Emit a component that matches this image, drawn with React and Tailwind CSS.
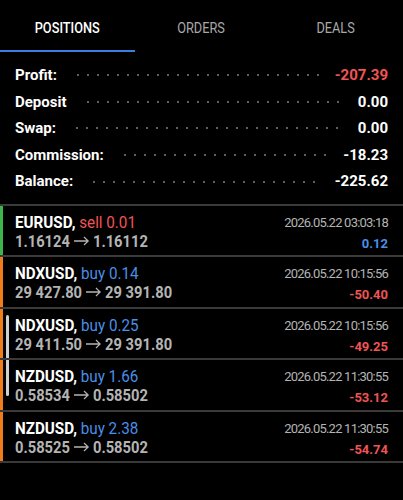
import React from "react";

const summary = [
  { label: "Profit:", value: "-207.39", red: true },
  { label: "Deposit", value: "0.00" },
  { label: "Swap:", value: "0.00" },
  { label: "Commission:", value: "-18.23" },
  { label: "Balance:", value: "-225.62" },
];

const trades = [
  { sym: "EURUSD", side: "sell", vol: "0.01", from: "1.16124", to: "1.16112", time: "2026.05.22 03:03:18", profit: "0.12", bar: "green" },
  { sym: "NDXUSD", side: "buy", vol: "0.14", from: "29 427.80", to: "29 391.80", time: "2026.05.22 10:15:56", profit: "-50.40", bar: "orange" },
  { sym: "NDXUSD", side: "buy", vol: "0.25", from: "29 411.50", to: "29 391.80", time: "2026.05.22 10:15:56", profit: "-49.25", bar: "orange", scroll: "top" },
  { sym: "NZDUSD", side: "buy", vol: "1.66", from: "0.58534", to: "0.58502", time: "2026.05.22 11:30:55", profit: "-53.12", bar: "orange", scroll: "bottom" },
  { sym: "NZDUSD", side: "buy", vol: "2.38", from: "0.58525", to: "0.58502", time: "2026.05.22 11:30:55", profit: "-54.74", bar: "orange" },
];

const Arrow = () => (
  <svg width="17" height="10" viewBox="0 0 17 10" className="mx-[4px] inline-block align-[1px]">
    <path d="M0 5 H15.5 M11 1 L15.5 5 L11 9" fill="none" stroke="#b4b4b4" strokeWidth="1.3" />
  </svg>
);

const TradeRow = ({ t }) => {
  const barClass = t.bar === "green" ? "bg-[#3cb64a]" : "bg-[#f07d1a]";
  return (
    <div className="relative flex h-[51.5px] border-b-2 border-[#3a3a3a]">
      <div className={`w-[3px] ${barClass}`} />
      {t.scroll === "top" && (
        <div className="absolute left-[6px] top-[6px] bottom-0 w-[3px] rounded-t bg-[#d0d0d0]" />
      )}
      {t.scroll === "bottom" && (
        <div className="absolute left-[6px] top-0 h-[36px] w-[3px] rounded-b bg-[#d0d0d0]" />
      )}
      <div className="flex flex-1 justify-between pl-[12px] pr-[15px] pt-[7px]">
        <div className="flex flex-col">
          <div className="origin-left scale-x-[0.95] whitespace-nowrap text-[16px] leading-[19px]">
            <span className="font-bold text-white">{t.sym},</span>{" "}
            <span className={t.side === "sell" ? "text-[#f05454]" : "text-[#4a8fe8]"}>
              {t.side} {t.vol}
            </span>
          </div>
          <div className="origin-left scale-x-[0.92] whitespace-nowrap text-[16px] leading-[19px] font-bold text-[#b4b4b4]">
            {t.from}
            <Arrow />
            {t.to}
          </div>
        </div>
        <div className="flex flex-col items-end pt-[2px]">
          <div className="text-[13px] leading-[16px] tracking-[-0.06em] text-[#b4b4b4]">{t.time}</div>
          <div
            className={`mt-[5px] text-[13px] leading-[16px] font-bold ${
              t.profit.startsWith("-") ? "text-[#f05454]" : "text-[#4a8fe8]"
            }`}
          >
            {t.profit}
          </div>
        </div>
      </div>
    </div>
  );
};

export default function App() {
  return (
    <div className="w-[403px] h-[500px] bg-black font-['Roboto',sans-serif] overflow-hidden">
      <div className="flex h-[52px]">
        <div className="relative flex w-[135px] items-center justify-center pt-[4px] text-[15px] font-medium text-white">
          <span className="inline-block scale-x-[0.85]">POSITIONS</span>
          <div className="absolute bottom-0 left-0 h-[2px] w-full bg-[#3b7ee0]" />
        </div>
        <div className="flex flex-1 items-center justify-center pt-[4px] text-[15px] text-[#a8a8a8]">
          <span className="inline-block scale-x-[0.85]">ORDERS</span>
        </div>
        <div className="flex w-[135px] items-center justify-center pt-[4px] text-[15px] text-[#a8a8a8]">
          <span className="inline-block scale-x-[0.85]">DEALS</span>
        </div>
      </div>
      <div className="flex flex-col px-[15px] pt-[10px] pb-[9px]">
        {summary.map((s) => (
          <div key={s.label} className="flex h-[26.6px] items-center text-[15px] font-bold text-white">
            <span>{s.label}</span>
            <div className="mx-[16px] h-[4px] flex-1 bg-[radial-gradient(circle,#5e5e5e_0.9px,transparent_1.3px)] bg-[length:10px_4px] bg-repeat-x" />
            <span className={s.red ? "text-[#f05454]" : "text-white"}>{s.value}</span>
          </div>
        ))}
      </div>
      <div className="border-t-2 border-[#3a3a3a]">
        {trades.map((t, i) => (
          <TradeRow key={i} t={t} />
        ))}
      </div>
    </div>
  );
}
